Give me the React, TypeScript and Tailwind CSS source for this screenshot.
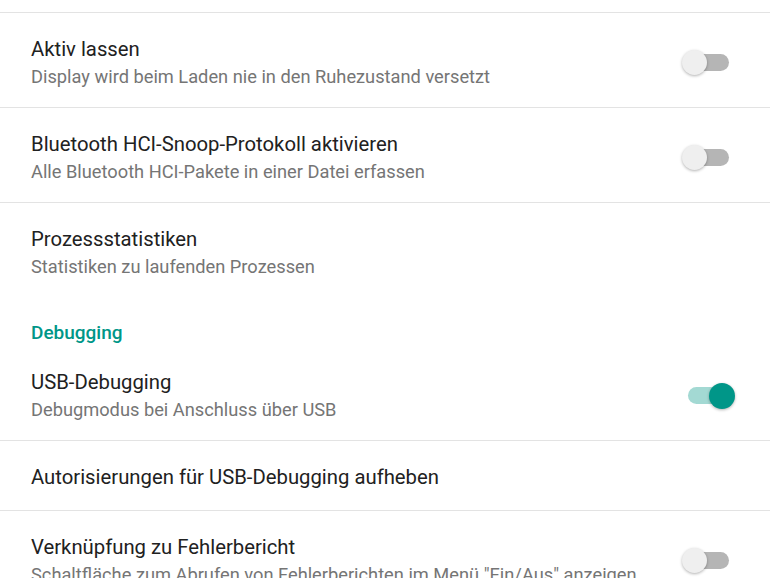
function Toggle({ on }: { on?: boolean }) {
  return (
    <div className="relative w-[53px] h-[26px] shrink-0">
      <div
        className={
          on
            ? "absolute left-[6px] right-[6px] top-[4px] h-[17px] rounded-full bg-[#a3d9d3]"
            : "absolute left-[6px] right-[6px] top-[4px] h-[17px] rounded-full bg-[#b5b5b5]"
        }
      />
      <div
        className={
          on
            ? "absolute right-0 top-0 w-[26px] h-[26px] rounded-full bg-[#009688] shadow-[0_1px_3px_rgba(0,0,0,0.3)]"
            : "absolute left-0 top-0 w-[25px] h-[25px] rounded-full bg-[#efefef] shadow-[0_1px_3px_rgba(0,0,0,0.3)]"
        }
      />
    </div>
  );
}

function Row({
  title,
  summary,
  toggle,
  on,
  divider = true,
}: {
  title: string;
  summary?: string;
  toggle?: boolean;
  on?: boolean;
  divider?: boolean;
}) {
  return (
    <div className={divider ? "border-b border-[#e3e3e3]" : ""}>
      <div
        className={
          summary
            ? "flex items-center pl-[31px] pr-[35px] pt-[23px] pb-[17px]"
            : "flex items-center pl-[31px] pr-[35px] pt-[23px] pb-[19px]"
        }
      >
        <div className="flex-1 min-w-0">
          <p className="text-[20.3px] leading-[27px] text-[#212121] whitespace-nowrap">{title}</p>
          {summary && (
            <p className="text-[18.25px] leading-[27px] text-[#757575] whitespace-nowrap">{summary}</p>
          )}
        </div>
        {toggle && <Toggle on={on} />}
      </div>
    </div>
  );
}

export default function App() {
  return (
    <div className="w-[770px] h-[578px] overflow-hidden bg-white font-['Roboto',sans-serif]">
      {/* tail of the previous entry */}
      <div className="h-[13px] border-b border-[#e3e3e3]" />

      <Row
        title="Aktiv lassen"
        summary="Display wird beim Laden nie in den Ruhezustand versetzt"
        toggle
      />
      <Row
        title="Bluetooth HCI-Snoop-Protokoll aktivieren"
        summary="Alle Bluetooth HCI-Pakete in einer Datei erfassen"
        toggle
      />
      <Row
        title="Prozessstatistiken"
        summary="Statistiken zu laufenden Prozessen"
        divider={false}
      />

      {/* Debugging category */}
      <div className="pl-[31px] pt-[23px]">
        <p className="text-[19px] leading-[26px] font-medium text-[#009688]">Debugging</p>
      </div>

      <Row
        title="USB-Debugging"
        summary="Debugmodus bei Anschluss über USB"
        toggle
        on
      />
      <Row title="Autorisierungen für USB-Debugging aufheben" />
      <Row
        title="Verknüpfung zu Fehlerbericht"
        summary={'Schaltfläche zum Abrufen von Fehlerberichten im Menü "Ein/Aus" anzeigen'}
        toggle
        divider={false}
      />
    </div>
  );
}
